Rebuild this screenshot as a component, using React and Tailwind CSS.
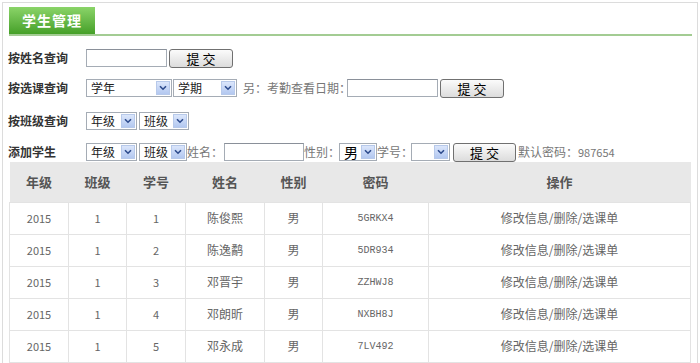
import React from "react";

const Arrow = () => (
  <div className="w-[14px] h-[14px] mr-px flex items-center justify-center bg-gradient-to-b from-[#dbe6fb] to-[#b3c8f0] border border-[#b7c9ea] shrink-0">
    <svg width="8" height="6" viewBox="0 0 8 6">
      <path d="M1 1.2 L4 4.2 L7 1.2" fill="none" stroke="#2c4a8c" strokeWidth="1.6" />
    </svg>
  </div>
);

const Select = ({ w, label, big }) => (
  <div className={`${w} h-[18px] bg-white border border-[#a5acb5] flex items-center justify-between shrink-0`}>
    <span className={`pl-[4px] whitespace-nowrap ${big ? "text-[14px] text-black" : "text-[12px] text-[#222]"} leading-none`}>{label}</span>
    <Arrow />
  </div>
);

const Input = ({ w }) => (
  <div className={`${w} h-[18px] bg-white border border-[#a5acb5] border-t-[#8a9099] shrink-0`} />
);

const Button = ({ w }) => (
  <div className={`${w} h-[19px] rounded-[3px] border border-[#707070] bg-gradient-to-b from-[#fbfbfb] to-[#dcdcdc] flex items-center justify-center text-[13px] text-black leading-none shrink-0 whitespace-nowrap`}>
    提&nbsp;交
  </div>
);

const Label = ({ children }) => (
  <div className="w-[78px] shrink-0 text-[12px] font-bold text-[#333] whitespace-nowrap">{children}</div>
);

const Txt = ({ w, children, cls = "" }) => (
  <span className={`${w} shrink-0 whitespace-nowrap text-[12px] text-[#777] ${cls}`}>{children}</span>
);

const rows = [
  ["2015", "1", "1", "陈俊熙", "男", "5GRKX4"],
  ["2015", "1", "2", "陈逸鹬", "男", "5DR934"],
  ["2015", "1", "3", "邓晋宇", "男", "ZZHWJ8"],
  ["2015", "1", "4", "邓朗昕", "男", "NXBH8J"],
  ["2015", "1", "5", "邓永成", "男", "7LV492"],
];

export default function App() {
  return (
    <div
      className="w-[700px] h-[363px] overflow-hidden bg-white"
      style={{ fontFamily: '"Noto Sans CJK SC", "Liberation Sans", sans-serif' }}
    >
      <div className="ml-[2px] mt-[2px] w-[696px] h-[400px] border border-[#dcdcdc] pl-[5px] pr-[5px]">
        <div className="mt-[4px] ml-px border-b-2 border-[#a3cc93] flex">
          <div className="w-[86px] h-[27px] bg-gradient-to-b from-[#8ad468] to-[#45a027] flex items-center justify-center text-white font-bold text-[14px] tracking-[1px]">
            学生管理
          </div>
        </div>

        <div className="mt-[13px] h-[18px] flex items-center">
          <Label>按姓名查询</Label>
          <Input w="w-[81px]" />
          <div className="w-[2px]" />
          <Button w="w-[64px]" />
        </div>

        <div className="mt-[12px] h-[18px] flex items-center">
          <Label>按选课查询</Label>
          <Select w="w-[86px]" label="学年" />
          <div className="w-[1px]" />
          <Select w="w-[64px]" label="学期" />
          <Txt w="w-[104px]" cls="ml-[6px] text-[11px]">另：考勤查看日期：</Txt>
          <Input w="w-[91px]" />
          <div className="ml-[2px]"><Button w="w-[64px]" /></div>
        </div>

        <div className="mt-[15px] h-[18px] flex items-center">
          <Label>按班级查询</Label>
          <Select w="w-[51px]" label="年级" />
          <div className="w-[2px]" />
          <Select w="w-[50px]" label="班级" />
        </div>

        <div className="mt-[13px] h-[18px] flex items-center">
          <Label>添加学生</Label>
          <Select w="w-[51px]" label="年级" />
          <div className="w-[2px]" />
          <Select w="w-[48px]" label="班级" />
          <Txt w="w-[37px]">姓名：</Txt>
          <Input w="w-[80px]" />
          <Txt w="w-[35px]">性别：</Txt>
          <Select w="w-[38px]" label="男" big />
          <Txt w="w-[34px]">学号：</Txt>
          <Select w="w-[39px]" label="" />
          <div className="ml-[3px]"><Button w="w-[63px]" /></div>
          <Txt w="" cls="ml-[2px]">默认密码：<span className="text-[11px]">987654</span></Txt>
        </div>

        <table className="mt-[1px] ml-[1px] w-[681px] table-fixed border-collapse">
          <colgroup>
            <col className="w-[59px]" />
            <col className="w-[58px]" />
            <col className="w-[59px]" />
            <col className="w-[79px]" />
            <col className="w-[58px]" />
            <col className="w-[106px]" />
            <col className="w-[262px]" />
          </colgroup>
          <thead>
            <tr className="h-[40px] bg-[#e8e8e8]">
              {["年级", "班级", "学号", "姓名", "性别", "密码", "操作"].map((h) => (
                <th key={h} className="text-[13px] font-bold text-[#555] text-center p-0">{h}</th>
              ))}
            </tr>
          </thead>
          <tbody>
            {rows.map((r, i) => (
              <tr key={i} className="h-[32px]">
                {r.map((c, j) => (
                  <td
                    key={j}
                    className={`border border-[#e3e3e3] text-center p-0 text-[#666] ${
                      j === 5 ? "text-[10px]" : j === 3 || j === 4 ? "text-[12px]" : "text-[11px]"
                    }`}
                    style={j === 5 ? { fontFamily: '"Liberation Mono", monospace' } : undefined}
                  >
                    {c}
                  </td>
                ))}
                <td className="border border-[#e3e3e3] text-center p-0 text-[12px] text-[#666]">
                  修改信息/删除/选课单
                </td>
              </tr>
            ))}
          </tbody>
        </table>
      </div>
    </div>
  );
}
